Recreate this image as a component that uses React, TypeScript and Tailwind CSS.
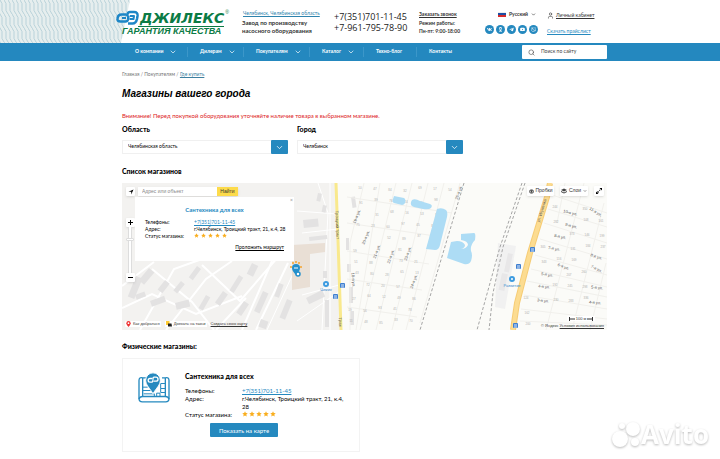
import type { ReactNode } from 'react';
import { ChevronDown, Search, User } from 'lucide-react';
import { FaOdnoklassniki, FaTelegramPlane, FaViber, FaVk, FaYoutube } from 'react-icons/fa';

const NAV = [
  { label: 'О компании', menu: true },
  { label: 'Дилерам', menu: true },
  { label: 'Покупателям', menu: true },
  { label: 'Каталог', menu: true },
  { label: 'Техно-блог', menu: false },
  { label: 'Контакты', menu: false }
];

const SOCIALS = [
  { name: 'VK', Icon: FaVk },
  { name: 'Одноклассники', Icon: FaOdnoklassniki },
  { name: 'Telegram', Icon: FaTelegramPlane },
  { name: 'YouTube', Icon: FaYoutube },
  { name: 'Viber', Icon: FaViber }
];

// x, y, angle, text
const STREETS: [number, number, number, string][] = [
  [236, 34, -68, '19-я ул.'],
  [245, 55, -68, '20-я ул.'],
  [256, 69, -70, '21-я ул.'],
  [270, 74, -70, '22-я ул.'],
  [287, 71, -70, '23-я ул.'],
  [293, 99, -70, '24-я ул.'],
  [230, 97, 86, '18-я ул.'],
  [338, 10, -70, '26-я ул.'],
  [448, 31, 14, '10-я ул.'],
  [473, 30, 32, '11-я ул.'],
  [449, 44, 14, '9-я ул.'],
  [438, 55, 12, '8-я ул.'],
  [432, 67, 10, '7-я ул.'],
  [441, 85, 22, '6-я ул.'],
  [425, 93, 10, '5-я ул.'],
  [422, 105, 8, '4-я ул.'],
  [421, 119, 8, '3-я ул.'],
  [474, 75, 18, '8-я ул.'],
  [474, 87, 26, '7-я ул.'],
  [475, 106, 6, '5-я ул.'],
  [473, 121, 4, '4-я ул.']
];

// x, y, width, height, angle
const BUILDINGS: [number, number, number, number, number][] = [
  [14, 93, 7, 22, 22],
  [27, 85, 7, 16, 40],
  [43, 97, 6, 12, 38],
  [59, 98, 5, 12, 40],
  [75, 83, 5, 14, 36],
  [13, 112, 10, 5, -20],
  [28, 118, 15, 6, -20],
  [53, 120, 14, 7, -14],
  [84, 112, 5, 15, 30],
  [101, 108, 6, 14, 35],
  [117, 92, 5, 18, 32],
  [122, 118, 6, 14, 34],
  [130, 80, 7, 12, 26],
  [141, 108, 6, 22, 24],
  [157, 100, 5, 14, 20],
  [139, 136, 8, 8, 20],
  [165, 116, 6, 20, 22],
  [181, 37, 15, 8, -6],
  [187, 54, 18, 4, -6],
  [196, 10, 4, 8, 12],
  [201, 22, 4, 7, 12],
  [184, 115, 18, 7, -26],
  [203, 117, 4, 27, 0],
  [201, 88, 4, 7, 0],
  [224, 55, 3, 12, 0],
  [225, 81, 4, 8, 0],
  [227, 104, 4, 16, 0],
  [228, 128, 4, 14, 0],
  [229, 14, 4, 11, -8],
  [386, 70, 5, 19, 12],
  [380, 90, 6, 17, 12]
];

const STOPS: [number, number][] = [
  [221, 103],
  [214, 114],
  [411, 67],
  [397, 84],
  [394, 143]
];

// house numbers on the garden plots, both sides of the railway;
// plots lying under a street name or a map control stay unnumbered
const isFree = (p: { x: number; y: number }) =>
  !STREETS.some(([x, y]) => Math.abs(x - p.x) < 9 && Math.abs(y - p.y) < 6) && !(p.x > 415 && (p.y > 126 || p.y < 16));

const WEST_PLOTS = Array.from({ length: 84 }, (_, i) => {
  const row = Math.floor(i / 7);
  return { x: 238 + (i % 7) * 15 + ((row * 7) % 5) - row, y: 6 + row * 12 + ((i * 5) % 4), n: 10 + ((i * 37) % 89) };
}).filter((p) => p.x < 333 - p.y * 0.3 && isFree(p));

const EAST_PLOTS = Array.from({ length: 66 }, (_, i) => {
  const row = Math.floor(i / 6);
  return { x: 402 + (i % 6) * 15 + ((row * 7) % 6), y: 12 + row * 13 + ((i * 5) % 4), n: 100 + ((i * 53) % 280) };
}).filter((p) => p.x > 436 - p.y * 0.28 && isFree(p));

function Stars({ className, size }: { className: string; size: string }) {
  return (
    <span role="img" aria-label="5 из 5" className={`flex ${className}`}>
      {[1, 2, 3, 4, 5].map((n) => (
        <svg key={n} viewBox="0 0 24 24" className={`${size} fill-[#f9ae1e]`}>
          <path d="M12 1l3.300 7.200 7.700.9-5.700 5.300 1.500 7.800L12 18.300 5.200 22.200l1.500-7.800L1 9.100l7.700-.9z" />
        </svg>
      ))}
    </span>
  );
}

function LogoMark({ className }: { className: string }) {
  return (
    <svg viewBox="0 0 46 32" fill="none" stroke="currentColor" strokeWidth="5" strokeLinejoin="round" className={className}>
      <path d="M21 9H11q-7 0-8 8-1 6 6 6h10q4 0 5-4l1-8" />
      <path d="M12 16h8" strokeWidth="4" />
      <path d="M24 27h9q7 0 9-9l1-6q1-8-7-8h-8q-4 0-5 4l-1 5" />
      <path d="M28 12h8l-1 6h-8" strokeWidth="4" />
    </svg>
  );
}

function Logo() {
  return (
    <a href="#" aria-label="Джилекс" className="flex w-[114px] flex-col">
      <span className="flex items-start gap-px">
        <LogoMark className="-mb-1 h-[16px] w-[23px] shrink-0 text-[#1d86c6]" />
        <span className="font-['DejaVu_Sans'] text-[14px] leading-[16px] font-bold text-[#0b7b45] italic">ДЖИЛЕКС</span>
        <span className="font-['Liberation_Sans'] text-[5px] leading-[5px] text-[#0b7b45]">®</span>
      </span>
      <span className="ml-[22px] h-px w-[86px] bg-[#0b7b45]" />
      <span className="ml-[6px] font-['Liberation_Sans'] text-[9px] leading-[8px] font-bold whitespace-nowrap text-[#0b7b45] italic">
        ГАРАНТИЯ КАЧЕСТВА
      </span>
    </a>
  );
}

function Header() {
  return (
    <header className="relative h-[43px] bg-white">
      <svg className="absolute inset-y-0 left-0 h-full w-[130px]" viewBox="0 0 130 43" preserveAspectRatio="none" aria-hidden="true">
        <defs>
          <pattern id="waves" width="4" height="14" patternUnits="userSpaceOnUse">
            <rect width="4" height="14" fill="#e6eeee" />
            <path d="M0 0q3 3.500 2 7t2 7M-4 0q3 3.500 2 7t2 7" stroke="#b9d2da" fill="none" />
          </pattern>
        </defs>
        <path d="M0 0h130l-9 43H0z" fill="url(#waves)" />
      </svg>
      <div className="relative grid grid-cols-[126px_92px_85px_68px_60px_1fr] pt-[10px] pl-[116px]">
        <Logo />
        <div className="whitespace-nowrap">
          <a href="#" className="ml-px block text-[5px] leading-[7px] text-[#2d83ad] underline">Челябинск, Челябинская область</a>
          <p className="pt-[2px] text-[6px] leading-[8px] font-bold text-[#333]">
            Завод по производству
            <br />
            насосного оборудования
          </p>
        </div>
        <div className="flex flex-col pt-px font-['Open_Sans'] text-[9px] leading-[11px] whitespace-nowrap text-[#222]">
          <a href="tel:+73517011145">+7(351)701-11-45</a>
          <a href="tel:+79617957890">+7-961-795-78-90</a>
        </div>
        <div className="text-[5px] leading-[8px] font-bold whitespace-nowrap text-[#333]">
          <a href="#" className="underline">Заказать звонок</a>
          <p className="pt-px">Режим работы:</p>
          <p>Пн-пт: 9:00-18:00</p>
        </div>
        <div className="flex flex-col gap-[7px]">
          <button type="button" className="ml-[11px] flex items-center gap-[3px] text-[5px] leading-[8px] font-bold text-[#333]">
            <span className="flex h-[5px] w-[8px] flex-col">
              <span className="h-px bg-[#eee]" />
              <span className="h-[2px] bg-[#1c4fa5]" />
              <span className="h-[2px] bg-[#d62b2b]" />
            </span>
            Русский
            <ChevronDown className="size-[5px]" strokeWidth={3} />
          </button>
          <div className="-ml-[2px] flex gap-[2px]">
            {SOCIALS.map(({ name, Icon }) => (
              <a key={name} href="#" aria-label={name} className="flex size-[9px] items-center justify-center rounded-full bg-[#2589bf] text-white">
                <Icon className="size-[5px]" />
              </a>
            ))}
          </div>
        </div>
        <div className="flex flex-col items-start gap-[8px] pt-px text-[5px] leading-[8px]">
          <a href="#" className="flex items-center gap-[2px] text-[#333] underline">
            <User className="size-[7px]" />
            Личный кабинет
          </a>
          <a href="#" className="text-[#2589bf] underline">Скачать прайслист</a>
        </div>
      </div>
    </header>
  );
}

function Nav() {
  return (
    <nav className="flex h-[18px] items-center justify-between bg-[#2488bf] pr-[113px] pl-[122px]">
      <ul className="grid grid-cols-[65px_56px_66px_54px_53px_50px] text-[5px] font-bold text-white">
        {NAV.map(({ label, menu }) => (
          <li key={label} className="flex h-[10px] items-center border-l border-[#3c97c9] pl-[12px] first:border-transparent">
            <a href="#" className="flex items-center gap-[6px] whitespace-nowrap">
              {label}
              {menu && <ChevronDown className="size-[8px]" strokeWidth={2} />}
            </a>
          </li>
        ))}
      </ul>
      <label className="flex h-[14px] w-[85px] items-center gap-[6px] rounded-[1px] bg-white px-[6px]">
        <Search className="size-[7px] shrink-0 text-[#444]" />
        <input type="search" aria-label="Поиск по сайту" placeholder="Поиск по сайту" className="w-full min-w-0 text-[5px] outline-none placeholder:text-[#444]" />
      </label>
    </nav>
  );
}

function Picker({ id, label, value }: { id: string; label: string; value: string }) {
  return (
    <div className="w-[166px]">
      <label htmlFor={id} className="block text-[7px] leading-[8px] font-black">{label}</label>
      <div className="mt-[7px] grid h-[14px] grid-cols-[1fr_17px]">
        <select id={id} className="col-span-2 col-start-1 row-start-1 appearance-none border border-[#f0f0f0] bg-white px-[5px] text-[5px]">
          <option>{value}</option>
        </select>
        <span className="pointer-events-none col-start-2 row-start-1 flex items-center justify-center rounded-[1px] bg-[#2589bf] text-white">
          <ChevronDown className="size-[9px]" strokeWidth={2} />
        </span>
      </div>
    </div>
  );
}

function MapCanvas() {
  return (
    <svg viewBox="0 0 485 147" preserveAspectRatio="xMinYMin slice" className="block h-full w-full font-['Liberation_Sans']">
      <rect width="485" height="147" fill="#fbfbf8" />
      <path d="M0 0h214l5 147H0z" fill="#f3f2f0" />
      <g stroke="#fff" strokeWidth="2" fill="none">
        <path d="M0 103l32-24M18 147L52 86l28-10M44 147l40-51 26-18M30 86l40 33 22 28M80 82l38 36 38-44M94 147l30-32M0 125l30-14 44 20 46-18M150 78l-30 69M166 80l-32 67" />
        <path d="M175 82l-30 65M180 50l36-4M196 0l10 30-6 117M175 28l40 3M180 112l37-10M175 138l43-30M208 0v147" strokeWidth="1" />
      </g>
      {BUILDINGS.map(([x, y, w, h, a]) => (
        <rect key={`${x}-${y}`} x={x} y={y} width={w} height={h} fill="#e3e2e2" transform={`rotate(${a} ${x} ${y})`} />
      ))}
      <path d="M170 62l33-2v9l-15 2v33l-18 3z" fill="#e9dfd5" />
      <path d="M376 60l18 3-11 63-10-2z" fill="#ebebec" opacity=".6" />

      <g stroke="#f1f0ec" strokeWidth="1" fill="none">
        <path d="M242 0l-14 60v87M258 0l-24 147M274 0l-36 147M290 0l-36 147M306 0l-36 147M322 0l-38 147M338 0l-40 140" />
        <path d="M225 14l105 16M225 40l95 14M225 68l82 13M225 96l75 11M225 124l70 10" />
        <path d="M430 12l55 18M426 26l59 18M422 40l63 20M418 56l67 20M413 72l72 20M409 86l76 18M405 98l80 16M402 112l83 14M399 126l86 10M398 138l87 4" />
        <path d="M462 0l-38 147M482 20l-32 127M484 80l-16 67M443 0l-8 40" />
      </g>
      <g fill="#b0b0ae" fontSize="3" textAnchor="middle">
        {WEST_PLOTS.map((p) => (
          <text key={`${p.x}-${p.y}`} x={p.x} y={p.y}>{p.n}</text>
        ))}
        {EAST_PLOTS.map((p) => (
          <text key={`${p.x}-${p.y}`} x={p.x} y={p.y}>{p.n}</text>
        ))}
      </g>

      <g fill="#addcf5">
        <path d="M272 13l10 2q2 1 1 5-1 2-3 2l-8-2q-2-1-1-4z" />
        <path d="M290 17q3-2 8 1l10 3q3 1 1 4-2 2-8 1l-9-2q-4-1-3-5z" />
        <path d="M315 26q5-2 9 1 2 2 1 7l-7 28q-1 5-5 5l-9-1q5-18 11-40z" />
        <path d="M339 51l13-1q2 0 1 7-5 5-4 11 2 4 0 10-2 4-7 3l-17-6 4-16 6-1q6 0 8 4 0 3-4 4 5 0 7-4 0-4-7-5z" />
      </g>

      <path d="M214 0l2 57 3 90" stroke="#f9e98d" strokeWidth="3" fill="none" />
      <path d="M428 0l-3 14-17 56-13 50-4 27" stroke="#f6cc75" strokeWidth="6" fill="none" />
      <path d="M428 0l-3 14-17 56-13 50-4 27" stroke="#fcdc91" strokeWidth="4" fill="none" />
      <g stroke="#a5a5a5" strokeWidth="1" strokeDasharray="3 2" fill="none">
        <path d="M342 0l-44 147" />
        <path d="M400 0l-22 64-23 83" />
        <path d="M403 0l-22 64-10 46-4 37" />
      </g>

      <g fill="#555" fontSize="4" textAnchor="middle">
        {STREETS.map(([x, y, a, name]) => (
          <text key={`${x}-${y}`} x={x} y={y} transform={`rotate(${a} ${x} ${y})`}>{name}</text>
        ))}
        <text x="214" y="42" transform="rotate(88 214 42)">Троицкий тракт</text>
        <text x="217" y="139" transform="rotate(88 217 139)">Трои</text>
        <text x="421" y="28" transform="rotate(-73 421 28)">ул. Игуменка</text>
      </g>

      {STOPS.map(([x, y]) => (
        <g key={`${x}-${y}`}>
          <rect x={x - 3} y={y - 3} width="5" height="5" rx="1" fill="#3f7fd0" />
          <path d={`M${x - 2} ${y - 1}h3M${x - 2} ${y + 1}h3`} stroke="#dbe9fa" strokeWidth="1" />
        </g>
      ))}
      <g fill="#fff" stroke="#3d9be0" strokeWidth="2">
        <circle cx="204" cy="101" r="2" />
        <circle cx="390" cy="96" r="2" />
      </g>
      <g fill="#3d8fd0" fontSize="4" textAnchor="middle">
        <text x="204" y="108">Чижик</text>
        <text x="390" y="104">Развитие</text>
      </g>

      {/* selected shop */}
      <g fill="#f4a52c">
        <circle cx="169" cy="84" r="1" />
        <circle cx="171" cy="80" r="1" />
        <circle cx="174" cy="79" r="1" />
        <circle cx="177" cy="80" r="1" />
        <circle cx="179" cy="84" r="1" />
      </g>
      <path d="M174 81a4 4 0 0 1 4 4q0 3-4 7-4-4-4-7a4 4 0 0 1 4-4z" fill="#2490cc" />
      <circle cx="176" cy="91" r="2" fill="#fff" stroke="#2490cc" strokeWidth="1.500" />
      <path d="M172 85h4" stroke="#fff" />
    </svg>
  );
}

function MapButton({ label, className, children }: { label: string; className: string; children: ReactNode }) {
  return (
    <button type="button" aria-label={label} className={`flex items-center justify-center rounded-[1px] bg-white text-[5px] shadow-sm ${className}`}>
      {children}
    </button>
  );
}

function ShopMap() {
  return (
    <section aria-label="Карта магазинов" className="relative mt-[8px] h-[147px] overflow-hidden text-[#333]">
      <MapCanvas />

      <div className="absolute top-[4px] left-[4px] flex h-[9px] gap-[3px]">
        <MapButton label="Моё местоположение" className="w-[9px]">
          <svg viewBox="0 0 24 24" className="size-[6px]"><path d="M2 11L22 2l-9 20v-11z" /></svg>
        </MapButton>
        <form className="flex w-[100px] bg-white font-['Liberation_Sans'] text-[5px] shadow-sm">
          <input type="text" aria-label="Адрес или объект" placeholder="Адрес или объект" className="w-0 flex-1 px-[4px] outline-none placeholder:text-[#888]" />
          <button type="button" className="w-[21px] bg-[#fddb4b]">Найти</button>
        </form>
      </div>

      <div className="absolute top-[3px] right-[3px] flex h-[10px] gap-[6px] font-['Liberation_Sans']">
        <MapButton label="Пробки" className="w-[27px] gap-[2px]">
          <svg viewBox="0 0 12 12" className="size-[5px]" fill="none" stroke="#333" strokeWidth="2"><ellipse cx="6" cy="6" rx="5" ry="4" /><path d="M6 3v6M3 5h6" /></svg>
          Пробки
        </MapButton>
        <MapButton label="Слои" className="w-[28px] gap-[2px]">
          <svg viewBox="0 0 12 12" className="size-[6px]" fill="#444"><path d="M6 1l6 3-6 3-6-3z" /><path d="M0 6l6 3 6-3v2l-6 3-6-3z" /></svg>
          Слои
          <ChevronDown className="size-[4px]" strokeWidth={3} />
        </MapButton>
        <MapButton label="На весь экран" className="w-[10px]">
          <svg viewBox="0 0 12 12" className="size-[6px]"><path d="M7 0h5v5zM0 7v5h5zM8 3l1 1-2 2-1-1zM4 6l2 2-2 2-2-2z" /></svg>
        </MapButton>
      </div>

      <div className="absolute top-[35px] left-[3px] flex h-[64px] w-[10px] flex-col items-center justify-between">
        <MapButton label="Приблизить" className="size-[9px]">
          <svg viewBox="0 0 10 10" className="size-[5px]"><path d="M4 0h2v4h4v2H6v4H4V6H0V4h4z" /></svg>
        </MapButton>
        <span className="flex w-[4px] flex-1 flex-col items-center border-x border-[#ddd] bg-white pt-[11px]">
          <span className="h-[3px] w-[8px] shrink-0 rounded-[1px] border border-[#ddd] bg-white" />
        </span>
        <MapButton label="Отдалить" className="size-[9px]">
          <svg viewBox="0 0 10 10" className="size-[5px]"><path d="M0 4h10v2H0z" /></svg>
        </MapButton>
      </div>

      <div className="absolute top-[14px] left-[13px] h-[64px] w-[159px] bg-white px-[10px] pt-[9px] text-[5px] leading-[7px] text-black">
        <button type="button" aria-label="Закрыть" className="absolute top-px right-px text-[5px] leading-[5px] text-[#888]">×</button>
        <h3 className="text-center text-[6px] leading-[8px] font-bold text-[#2589bf]">Сантехника для всех</h3>
        <dl className="grid grid-cols-[49px_1fr] pt-[5px] whitespace-nowrap">
          <dt>Телефоны:</dt>
          <dd><a href="tel:+73517011145" className="text-[#2589bf] underline">+7(351)701-11-45</a></dd>
          <dt>Адрес:</dt>
          <dd>г.Челябинск, Троицкий тракт, 21, к.4, 28</dd>
          <dt>Статус магазина:</dt>
          <dd><Stars className="gap-[2px]" size="size-[5px]" /></dd>
        </dl>
        <a href="#" className="block pt-[4px] text-right underline">Проложить маршрут</a>
      </div>

      <div className="absolute bottom-[2px] left-[3px] flex h-[8px] items-center gap-[4px] font-['Liberation_Sans'] text-[4px]">
        <a href="#" className="flex items-center gap-[2px] rounded-[1px] bg-white px-px">
          <svg viewBox="0 0 10 14" className="h-[6px] w-[5px]"><path d="M5 0a5 5 0 0 1 5 5q0 4-5 9-5-5-5-9a5 5 0 0 1 5-5z" fill="#e33" /><circle cx="5" cy="5" r="2" fill="#fff" /></svg>
          Как добраться
        </a>
        <a href="#" className="flex items-center gap-[2px] bg-white px-px">
          <svg viewBox="0 0 12 12" className="size-[6px]"><path d="M0 0h7v8H0z" fill="#fc3" /><path d="M4 5h7l1 6H4z" fill="#222" /></svg>
          Доехать на такси
        </a>
        <a href="#" className="underline">Создать свою карту</a>
      </div>

      <div className="absolute right-[3px] bottom-[2px] flex flex-col items-end gap-[2px] font-['Liberation_Sans'] text-[4px] leading-[5px]">
        <span className="mr-[9px] flex w-[28px] items-center justify-center gap-px bg-white">
          <svg viewBox="0 0 6 4" className="h-[4px] w-[6px]" stroke="#333" fill="none"><path d="M0.500 0v4M0 2h6" /></svg>
          100 м
          <svg viewBox="0 0 6 4" className="h-[4px] w-[6px]" stroke="#333" fill="none"><path d="M5.500 0v4M0 2h6" /></svg>
        </span>
        <span>© Яндекс <a href="#" className="underline">Условия использования</a></span>
      </div>
    </section>
  );
}

function ShopIcon() {
  return (
    <svg viewBox="0 0 96 92" className="h-[31px] w-[32px] text-[#2589bf]" fill="none" stroke="currentColor" strokeWidth="4" aria-hidden="true">
      <path d="M24 17H14v56M14 17q-11-3-11 8v54q0 10 10 10h70q10 0 10-10V25q0-11-11-8v56M72 17h10" />
      <path d="M3 81q2-8 11-8h68q9 0 11 8" />
      <path d="M15 45h14M15 55h24v-8M17 65h32v8M56 73V63h10v10M82 34H68v15h14M68 49v12h14" strokeWidth="3" />
      <path d="M45 2a22 22 0 0 1 22 22c0 15-12 23-22 41-10-18-22-26-22-41A22 22 0 0 1 45 2z" fill="currentColor" stroke="#fff" strokeWidth="3" />
      <g stroke="#fff" strokeWidth="4">
        <path d="M43 19h-7a5 5 0 0 0 0 11h5q3 0 3-3v-3" />
        <path d="M46 27h8a6 6 0 0 0 0-12h-6q-3 0-3 4v4" />
      </g>
    </svg>
  );
}

function ShopCard() {
  return (
    <article className="mt-[8px] grid w-[238px] grid-cols-[47px_1fr] border border-[#f3f3f3] pt-[13px] pr-[12px] pb-[14px] pl-[15px] text-black">
      <ShopIcon />
      <div>
        <h3 className="text-[7px] leading-[8px] font-black">Сантехника для всех</h3>
        <dl className="grid grid-cols-[57px_1fr] pt-[7px] text-[6px] leading-[8px]">
          <dt>Телефоны:</dt>
          <dd><a href="tel:+73517011145" className="text-[#2589bf] underline">+7(351)701-11-45</a></dd>
          <dt>Адрес:</dt>
          <dd>г.Челябинск, Троицкий тракт, 21, к.4, 28</dd>
          <dt>Статус магазина:</dt>
          <dd><Stars className="gap-px" size="size-[6px]" /></dd>
        </dl>
      </div>
      <button type="button" className="mt-[4px] ml-[72px] h-[14px] w-[68px] rounded-[1px] bg-[#2589bf] text-[6px] text-white">
        Показать на карте
      </button>
    </article>
  );
}

function Watermark() {
  return (
    <div className="pointer-events-none fixed right-[11px] bottom-[11px] flex items-center gap-px drop-shadow-[0_1px_1px_#bbb]">
      <svg viewBox="0 0 28 28" className="size-[28px]" fill="#fff" aria-hidden="true">
        <circle cx="8" cy="19" r="8" />
        <circle cx="21" cy="9" r="7" />
        <circle cx="10" cy="6" r="3" />
        <circle cx="23" cy="22" r="4" />
      </svg>
      <span className="font-['Open_Sans'] text-[26px] leading-[28px] font-bold text-white">Avito</span>
    </div>
  );
}

export default function App() {
  return (
    <div className="min-h-screen bg-white font-['Lato','Noto_Sans',sans-serif] text-black">
      <Header />
      <Nav />
      <main className="pt-[9px] pr-[113px] pl-[122px]">
        <nav aria-label="Навигационная цепочка" className="text-[5px] leading-[8px] text-[#777]">
          <a href="#">Главная</a> / <a href="#">Покупателям</a> / <a href="#" className="text-[#3d7f9f] underline">Где купить</a>
        </nav>
        <h1 className="mt-[10px] font-['Liberation_Sans'] text-[10px] leading-[12px] font-bold italic">Магазины вашего города</h1>
        <p className="mt-[12px] text-[6px] leading-[8px] text-[#d22]">
          Внимание! Перед покупкой оборудования уточняйте наличие товара в выбранном магазине.
        </p>
        <div className="mt-[5px] flex gap-[9px]">
          <Picker id="region" label="Область" value="Челябинская область" />
          <Picker id="city" label="Город" value="Челябинск" />
        </div>
        <h2 className="mt-[13px] text-[7px] leading-[8px] font-black">Список магазинов</h2>
        <ShopMap />
        <h2 className="mt-[12px] text-[7px] leading-[8px] font-black">Физические магазины:</h2>
        <ShopCard />
      </main>
      <Watermark />
    </div>
  );
}
